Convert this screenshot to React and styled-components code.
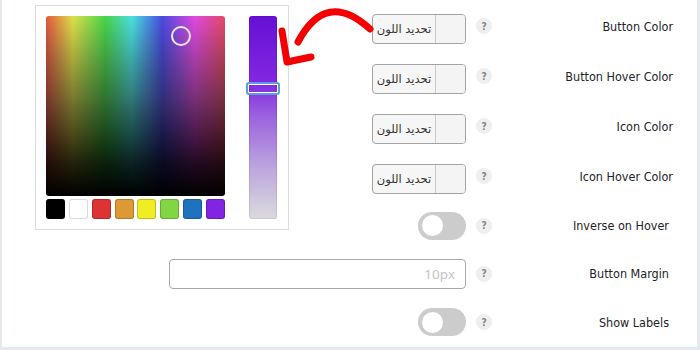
import React from "react";
import styled, { createGlobalStyle } from "styled-components";

const GlobalStyle = createGlobalStyle`
  html, body {
    margin: 0;
    padding: 0;
    background: #e4e9f0;
  }
  body {
    font-family: "DejaVu Sans Condensed", "DejaVu Sans", sans-serif;
  }
`;

const SWATCHES = ["#000000", "#ffffff", "#dd3333", "#dd9933", "#eeee22", "#81d742", "#1e73be", "#8224e3"];

const ROWS = [
  { label: "Button Color", type: "color", h: 50 },
  { label: "Button Hover Color", type: "color", h: 50 },
  { label: "Icon Color", type: "color", h: 50 },
  { label: "Icon Hover Color", type: "color", h: 50 },
  { label: "Inverse on Hover", type: "toggle", h: 49, pr: 4 },
  { label: "Button Margin", type: "input", h: 47, pr: 4 },
  { label: "Show Labels", type: "toggle", h: 50, pr: 4 },
];

const Page = styled.div`
  position: relative;
  width: 700px;
  height: 350px;
  box-sizing: border-box;
  padding: 0 3px 3px 2px;
  overflow: hidden;
`;

const Panel = styled.div`
  background: #fff;
  height: 100%;
  box-sizing: border-box;
  padding: 1px 24px 0 0;
  display: flex;
  flex-direction: column;
`;

const Row = styled.div`
  height: ${(p) => p.$h}px;
  display: flex;
  align-items: center;
  justify-content: flex-end;
`;

const Label = styled.div`
  width: 181px;
  box-sizing: border-box;
  padding-right: ${(p) => p.$pr || 0}px;
  text-align: right;
  font-size: 12.5px;
  color: #1d2327;
`;

const Help = styled.span`
  width: 16px;
  height: 16px;
  margin-left: 10px;
  border-radius: 50%;
  background: #efefef;
  color: #80858a;
  font-size: 10px;
  font-weight: bold;
  display: flex;
  align-items: center;
  justify-content: center;
`;

const ColorButton = styled.div`
  width: 94px;
  height: 30px;
  margin-top: 5px;
  box-sizing: border-box;
  border: 1px solid #a3a3a3;
  border-radius: 4px;
  background: #f6f6f6;
  display: flex;
`;

const ColorText = styled.span`
  width: 62px;
  border-right: 1px solid #c8c8c8;
  display: flex;
  align-items: center;
  justify-content: center;
  font-family: "DejaVu Sans", sans-serif;
  font-size: 11.5px;
  color: #333;
`;

const ColorSample = styled.span`
  flex: 1;
  background: #f4f4f4;
  border-radius: 0 3px 3px 0;
`;

const Toggle = styled.div`
  width: 48px;
  height: 28px;
  border-radius: 14px;
  background: #cccccc;
  display: flex;
  align-items: center;
  padding-left: 4px;
  box-sizing: border-box;
`;

const Knob = styled.span`
  width: 21px;
  height: 21px;
  border-radius: 50%;
  background: #fff;
`;

const TextInput = styled.div`
  width: 297px;
  height: 30px;
  box-sizing: border-box;
  border: 1px solid #a8a8a8;
  border-radius: 4px;
  display: flex;
  align-items: center;
  justify-content: flex-end;
  padding-right: 10px;
  font-family: "Open Sans", sans-serif;
  font-size: 13.5px;
  color: #c2c2c2;
`;

const Picker = styled.div`
  position: absolute;
  left: 35px;
  top: 5px;
  width: 254px;
  height: 225px;
  box-sizing: border-box;
  border: 1px solid #dcdcdc;
  background: #fff;
  padding: 10px 11px 10px 10px;
  display: flex;
  gap: 24px;
`;

const PickerMain = styled.div`
  width: 179px;
  display: flex;
  flex-direction: column;
  gap: 3px;
`;

const Square = styled.div`
  position: relative;
  height: 180px;
  border-radius: 3px;
  background:
    linear-gradient(to bottom, rgba(0, 0, 0, 0) 0%, rgba(0, 0, 0, 0.4) 45%, rgba(0, 0, 0, 0.85) 82%, #000 100%),
    linear-gradient(to bottom, rgba(160, 160, 160, 0.15) 0%, rgba(128, 128, 128, 0.3) 50%, rgba(0, 0, 0, 0) 100%),
    linear-gradient(to right, #f04a30 0%, #ecec3a 15%, #3ade3a 33%, #3aecec 48%, #3a3aec 65%, #ec3aec 83%, #f03a5a 100%);
`;

const Marker = styled.span`
  position: absolute;
  left: 125px;
  top: 10px;
  width: 20px;
  height: 20px;
  box-sizing: border-box;
  border: 2px solid #e8e8e8;
  border-radius: 50%;
`;

const Swatches = styled.div`
  display: flex;
  justify-content: space-between;
`;

const Swatch = styled.span`
  width: 19px;
  height: 20px;
  border-radius: 3px;
  background: ${(p) => p.$c};
  box-shadow: inset 0 0 0 1px rgba(0, 0, 0, ${(p) => (p.$c === "#ffffff" ? 0.15 : 0.2)});
`;

const Strip = styled.div`
  position: relative;
  width: 28px;
  height: 203px;
  border-radius: 3px;
  box-shadow: inset 0 0 0 1px rgba(0, 0, 0, 0.08);
  background: linear-gradient(to bottom, #6610d6 0%, #8228e0 33%, #9c64de 50%, #bca6de 75%, #dcdadd 100%);
`;

const StripHandle = styled.span`
  position: absolute;
  left: -3px;
  top: 66px;
  width: 34px;
  height: 13px;
  box-sizing: border-box;
  border: 2px solid #5a9ee0;
  border-radius: 3px;
  box-shadow: inset 0 0 0 1px #fff;
`;

const Arrow = styled.svg`
  position: absolute;
  left: 0;
  top: 0;
  pointer-events: none;
`;

function Control({ type }) {
  if (type === "color") {
    return (
      <ColorButton>
        <ColorText>تحديد اللون</ColorText>
        <ColorSample />
      </ColorButton>
    );
  }
  if (type === "toggle") {
    return (
      <Toggle>
        <Knob />
      </Toggle>
    );
  }
  return <TextInput>10px</TextInput>;
}

export default function App() {
  return (
    <>
      <GlobalStyle />
      <Page>
        <Panel>
          {ROWS.map((r) => (
            <Row key={r.label} $h={r.h}>
              <Control type={r.type} />
              <Help>?</Help>
              <Label $pr={r.pr}>{r.label}</Label>
            </Row>
          ))}
        </Panel>

        <Picker>
          <PickerMain>
            <Square>
              <Marker />
            </Square>
            <Swatches>
              {SWATCHES.map((c) => (
                <Swatch key={c} $c={c} />
              ))}
            </Swatches>
          </PickerMain>
          <Strip>
            <StripHandle />
          </Strip>
        </Picker>

        <Arrow width="700" height="350" viewBox="0 0 700 350">
          <g fill="none" stroke="#f40000" strokeWidth="7" strokeLinecap="round" strokeLinejoin="round">
            <path d="M370 29 Q326 -11 298 42" />
            <path d="M282 31 L287 62 L311 57" />
          </g>
        </Arrow>
      </Page>
    </>
  );
}
